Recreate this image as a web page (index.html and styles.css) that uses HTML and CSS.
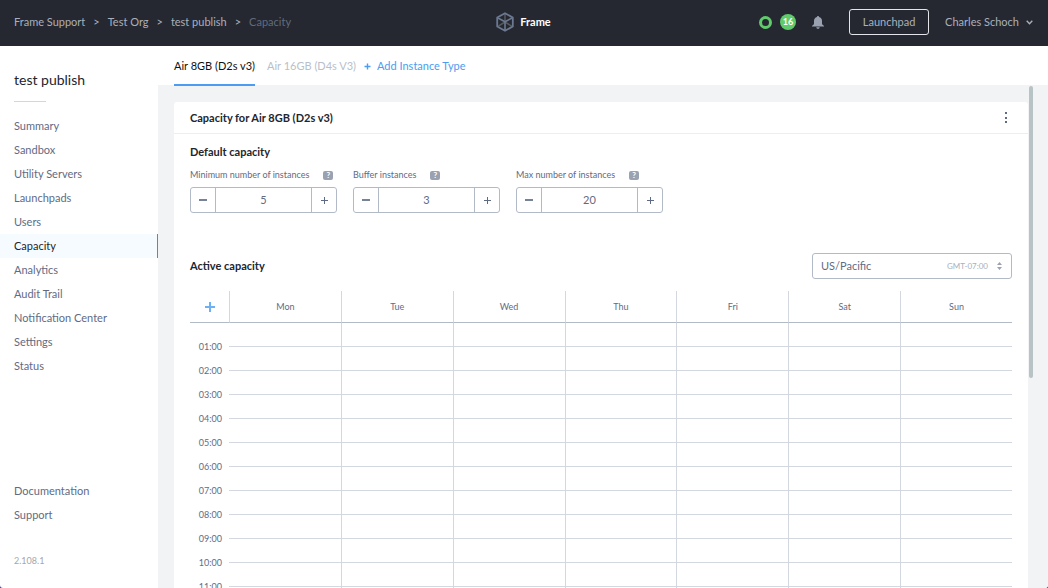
FILE: index.html
```html
<!DOCTYPE html>
<html lang="en">
<head>
<meta charset="utf-8">
<title>Capacity - Frame</title>
<link rel="stylesheet" href="styles.css">
</head>
<body>
<div class="app">
  <header class="topbar">
    <nav class="crumbs" aria-label="Breadcrumb">
      <a href="#">Frame Support</a><span>&gt;</span><a href="#">Test Org</a><span>&gt;</span><a href="#">test publish</a><span>&gt;</span><a href="#" class="current">Capacity</a>
    </nav>
    <div class="brand">
      <svg width="18" height="20" viewBox="0 0 18 20" fill="none" stroke-linejoin="round">
        <path d="M9 1V9.500M2 14.300L9 10L16 14.300" stroke="#555a5f" stroke-width="1.500"/>
        <path d="M9 1.200L16.800 5.500V14.500L9 18.800L1.200 14.500V5.500Z" stroke="#6b7890" stroke-width="1.800"/>
        <path d="M1.500 5.700L9 9.800L16.500 5.700M9 9.800V18.500" stroke="#6b7890" stroke-width="1.600"/>
      </svg>
      <span>Frame</span>
    </div>
    <div class="tools">
      <span class="ring"></span>
      <span class="count">16</span>
      <button class="bell" type="button" aria-label="Notifications">
        <svg width="12" height="13" viewBox="0 0 12 13" fill="#9aa2b1"><path d="M6 0C6.600 0 7 .4 7 1C9 1.400 10 3 10 5V7.500C10 8.500 11 9 12 10V10.500H0V10C1 9 2 8.500 2 7.500V5C2 3 3 1.400 5 1C5 .4 5.400 0 6 0ZM4.300 11.200H7.700C7.500 12.300 7 12.800 6 12.800S4.500 12.300 4.300 11.200Z"/></svg>
      </button>
      <button class="launch" type="button">Launchpad</button>
      <button class="user" type="button">Charles Schoch
        <svg width="7" height="5" viewBox="0 0 7 5" fill="none" stroke="#a9b0bd" stroke-width="1.400"><path d="M.7 .8L3.500 3.700L6.300 .8"/></svg>
      </button>
    </div>
  </header>
  <div class="body">
    <aside class="sidebar">
      <h1>test publish</h1>
      <nav class="menu">
        <a href="#">Summary</a><a href="#">Sandbox</a><a href="#">Utility Servers</a><a href="#">Launchpads</a><a href="#">Users</a><a href="#" class="active">Capacity</a><a href="#">Analytics</a><a href="#">Audit Trail</a><a href="#">Notification Center</a><a href="#">Settings</a><a href="#">Status</a>
      </nav>
      <nav class="menu help"><a href="#">Documentation</a><a href="#">Support</a></nav>
      <div class="version">2.108.1</div>
    </aside>
    <main class="main">
      <nav class="tabs">
        <a href="#" class="selected">Air 8GB (D2s v3)</a>
        <a href="#">Air 16GB (D4s V3)</a>
        <button type="button"><svg width="7" height="7" viewBox="0 0 7 7" stroke="#4a9df0" stroke-width="1.400"><path d="M3.500 .5V6.500M.5 3.500H6.500"/></svg>Add Instance Type</button>
      </nav>
      <div class="scroll">
        <section class="card">
          <header class="card-head">
            <h2>Capacity for Air 8GB (D2s v3)</h2>
            <button type="button" aria-label="More"><svg width="4" height="12" viewBox="0 0 4 12" fill="#5f6b84"><rect x="1" y="0" width="2" height="2"/><rect x="1" y="5" width="2" height="2"/><rect x="1" y="9" width="2" height="2"/></svg></button>
          </header>
          <div class="card-body">
            <h3>Default capacity</h3>
            <div class="fields">
              <div class="field">
                <div class="label"><label for="min">Minimum number of instances</label><span class="hint">?</span></div>
                <div class="stepper"><button type="button" class="minus" aria-label="Decrease"></button><input id="min" type="text" value="5"><button type="button" class="plus" aria-label="Increase"></button></div>
              </div>
              <div class="field">
                <div class="label"><label for="buf">Buffer instances</label><span class="hint">?</span></div>
                <div class="stepper"><button type="button" class="minus" aria-label="Decrease"></button><input id="buf" type="text" value="3"><button type="button" class="plus" aria-label="Increase"></button></div>
              </div>
              <div class="field">
                <div class="label"><label for="max">Max number of instances</label><span class="hint">?</span></div>
                <div class="stepper"><button type="button" class="minus" aria-label="Decrease"></button><input id="max" type="text" value="20"><button type="button" class="plus" aria-label="Increase"></button></div>
              </div>
            </div>
            <div class="active-head">
              <h3>Active capacity</h3>
              <div class="zone">
                <select aria-label="Time zone"><option>US/Pacific</option></select>
                <span class="offset">GMT-07:00 <svg width="5" height="8" viewBox="0 0 5 8" fill="#9aa2b1"><path d="M0 3L2.500 0L5 3ZM0 5L2.500 8L5 5Z"/></svg></span>
              </div>
            </div>
            <table class="week">
              <colgroup><col class="hours"><col><col><col><col><col><col><col></colgroup>
              <thead><tr><th><button type="button" class="add" aria-label="Add"></button></th><th>Mon</th><th>Tue</th><th>Wed</th><th>Thu</th><th>Fri</th><th>Sat</th><th>Sun</th></tr></thead>
              <tbody>
                <tr class="lead"><th></th><td></td><td></td><td></td><td></td><td></td><td></td><td></td></tr>
                <tr><th>01:00</th><td></td><td></td><td></td><td></td><td></td><td></td><td></td></tr>
                <tr><th>02:00</th><td></td><td></td><td></td><td></td><td></td><td></td><td></td></tr>
                <tr><th>03:00</th><td></td><td></td><td></td><td></td><td></td><td></td><td></td></tr>
                <tr><th>04:00</th><td></td><td></td><td></td><td></td><td></td><td></td><td></td></tr>
                <tr><th>05:00</th><td></td><td></td><td></td><td></td><td></td><td></td><td></td></tr>
                <tr><th>06:00</th><td></td><td></td><td></td><td></td><td></td><td></td><td></td></tr>
                <tr><th>07:00</th><td></td><td></td><td></td><td></td><td></td><td></td><td></td></tr>
                <tr><th>08:00</th><td></td><td></td><td></td><td></td><td></td><td></td><td></td></tr>
                <tr><th>09:00</th><td></td><td></td><td></td><td></td><td></td><td></td><td></td></tr>
                <tr><th>10:00</th><td></td><td></td><td></td><td></td><td></td><td></td><td></td></tr>
                <tr><th>11:00</th><td></td><td></td><td></td><td></td><td></td><td></td><td></td></tr>
              </tbody>
            </table>
          </div>
        </section>
        <div class="thumb"></div>
      </div>
    </main>
  </div>
</div>
</body>
</html>
```
FILE: styles.css
```css
* { box-sizing: border-box; }
html { background: #4b3b86; }
body { margin: 0; font: 11px/24px Lato, "Open Sans", sans-serif; color: #5f6b84; }
a { color: inherit; text-decoration: none; }
button, input, select { font: inherit; color: inherit; background: none; border: 0; padding: 0; margin: 0; }
button { display: flex; align-items: center; justify-content: center; }
svg { display: block; flex: none; }
h1, h2, h3 { margin: 0; font-weight: 700; color: #22252e; }
h2, h3 { font-size: 11px; line-height: 16px; }

.app { height: 100vh; display: flex; flex-direction: column; overflow: hidden; background: #fff; border-radius: 0 0 3px 3px; }
.topbar { flex: none; height: 46px; padding: 0 15px 2px 14px; display: grid; grid-template-columns: 1fr auto 1fr; align-items: center; background: #252830; color: #a9b0bd; }
.crumbs { display: flex; gap: 8px; }
.crumbs .current { color: #626b7e; }
.brand { display: flex; align-items: center; gap: 6px; color: #fff; font-weight: 700; }
.tools { display: flex; align-items: center; justify-content: flex-end; }
.ring { width: 13px; height: 13px; border: 3px solid #5fcb6b; border-radius: 50%; margin-right: 8px; }
.count { width: 16px; height: 16px; border-radius: 50%; background: #5fcb6b; color: #fff; font-size: 9px; font-weight: 700; line-height: 16px; text-align: center; margin-right: 16px; }
.launch { width: 80px; height: 26px; border: 1px solid #e3e5ea; border-radius: 3px; margin: 0 16px 0 25px; }
.user { gap: 7px; }

.body { flex: 1; min-height: 0; display: flex; }
.sidebar { flex: none; width: 158px; padding: 24px 0 15px; display: flex; flex-direction: column; }
.sidebar h1 { margin: 0 0 12px 14px; font-size: 14px; line-height: 20px; font-weight: 400; }
.sidebar h1::after { content: ""; display: block; width: 32px; height: 1px; margin-top: 11px; background: #d3d6dc; }
.menu { display: flex; flex-direction: column; }
.menu a { padding-left: 14px; }
.menu .active { background: #f5fbff; color: #22252e; border-right: 1px solid #3f8fdc; }
.help { margin-top: auto; }
.version { margin-top: 22px; padding-left: 14px; font-size: 9px; color: #a3a7ae; }

.main { flex: 1; min-width: 0; display: flex; flex-direction: column; background: #f2f3f5; }
.tabs { flex: none; height: 39px; padding-left: 16px; display: flex; gap: 12px; background: #fff; color: #b9bfca; line-height: 40px; }
.tabs .selected { height: 40px; color: #111; border-bottom: 2px solid #4a9df0; z-index: 1; }
.tabs button { height: 40px; gap: 6px; margin-left: -4px; color: #4a9df0; }
.scroll { flex: 1; min-height: 0; position: relative; overflow: hidden; padding: 17px 20px 0 16px; }
.thumb { position: absolute; right: 15px; top: 1px; width: 4px; height: 292px; border-radius: 2px; background: #b8c3c6; }
.card { background: #fff; border-radius: 3px; }
.card-head { height: 32px; padding: 0 20px 0 16px; display: flex; align-items: center; justify-content: space-between; border-bottom: 1px solid #eceef1; }
.card-body { padding: 10px 16px; }
.fields { display: flex; gap: 16px; margin-top: 6px; }
.label { display: flex; align-items: center; gap: 14px; font-size: 9px; line-height: 18px; }
.hint { width: 10px; height: 9px; border-radius: 2px; background: #9aa2b1; color: #fff; font-size: 8px; font-weight: 700; line-height: 9px; text-align: center; }
.stepper { width: 147px; height: 26px; margin-top: 3px; display: flex; border: 1px solid #b3bac7; border-radius: 3px; }
.stepper input { flex: 1; min-width: 0; text-align: center; border: solid #b3bac7; border-width: 0 1px; }
.stepper button { width: 24px; }
.minus { background: linear-gradient(#76819a, #76819a) center / 8px 2px no-repeat; }
.plus { background: linear-gradient(#5f6b84, #5f6b84) center / 7px 1px no-repeat, linear-gradient(#5f6b84, #5f6b84) center / 1px 7px no-repeat; }
.active-head { margin-top: 40px; display: flex; align-items: center; justify-content: space-between; }
.zone { position: relative; width: 200px; }
.zone select { display: block; width: 100%; height: 26px; padding: 0 8px; appearance: none; border: 1px solid #b3bac7; border-radius: 3px; }
.offset { position: absolute; right: 10px; top: 1px; display: flex; align-items: center; gap: 9px; font-size: 8px; color: #a9b0bd; pointer-events: none; }
.week { width: 100%; margin-top: 12px; table-layout: fixed; border-collapse: separate; border-spacing: 0; font-size: 9px; }
.week .hours { width: 39px; }
.week th, .week td { height: 24px; padding: 0; font-weight: 400; line-height: 16px; }
.week thead th { height: 32px; border-bottom: 1px solid #b3bac7; }
.week thead th + th, .week td + td { border-left: 1px solid #d3d7df; }
.week tbody th { text-align: right; padding-right: 7px; }
.week td { background: linear-gradient(#d3d7df, #d3d7df) 0 11px / 100% 1px no-repeat; }
.week .lead th, .week .lead td { height: 12px; line-height: 0; background: none; }
.add { width: 10px; height: 10px; margin: 0 auto; background: linear-gradient(#6db0f3, #6db0f3) center / 10px 2px no-repeat, linear-gradient(#6db0f3, #6db0f3) center / 2px 10px no-repeat; }
```
